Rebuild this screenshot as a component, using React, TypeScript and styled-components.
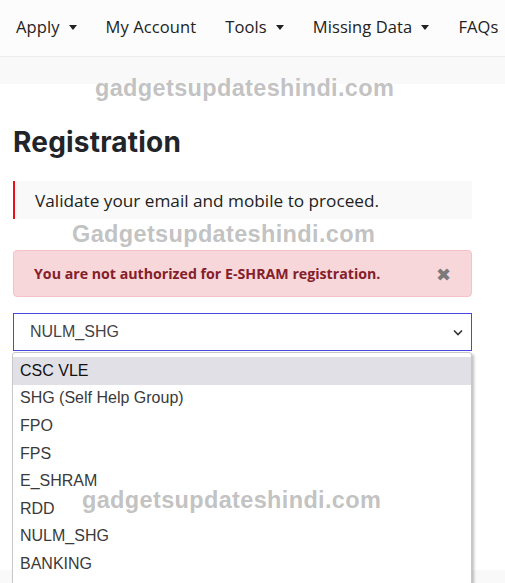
import React from "react";
import styled, { createGlobalStyle } from "styled-components";

const Global = createGlobalStyle`
  html, body { margin: 0; padding: 0; background: #fff; }
  body { font-family: "Open Sans", "Noto Sans", sans-serif; color: #212529; overflow: hidden; }
  * { box-sizing: border-box; }
`;

const Page = styled.div`
  position: relative;
  width: 505px;
  height: 583px;
  overflow: hidden;
`;

const Nav = styled.nav`
  height: 57px;
  background: #fcfcfc;
  border-bottom: 1px solid #ececec;
  display: flex;
  align-items: center;
  padding: 0 0 3px 16px;
  gap: 29px;
  white-space: nowrap;
`;

const NavItem = styled.div`
  display: flex;
  align-items: center;
  gap: 9px;
  font-size: 16.5px;
  color: #222;
  letter-spacing: 0.1px;
`;

const Caret = styled.span`
  width: 0;
  height: 0;
  border-left: 4px solid transparent;
  border-right: 4px solid transparent;
  border-top: 5px solid #222;
  margin-top: 1px;
`;

const Band = styled.div`
  height: 27px;
  background: #f9f9f9;
`;

const Main = styled.main`
  padding: 0 33px 0 13px;
  display: flex;
  flex-direction: column;
`;

const Heading = styled.h1`
  margin: 40px 0 0;
  font-family: "Inter", sans-serif;
  font-weight: 700;
  font-size: 28px;
  letter-spacing: 0.2px;
  line-height: 36px;
  color: #212529;
`;

const Notice = styled.div`
  margin-top: 21px;
  height: 38px;
  background: #f9f9f9;
  border-left: 2px solid #e8101a;
  display: flex;
  align-items: center;
  padding-left: 20px;
  font-size: 17.2px;
  color: #222;
`;

const Alert = styled.div`
  margin-top: 31px;
  height: 47px;
  background: #f8d7da;
  border: 1px solid #f5c2c7;
  border-radius: 4px;
  display: flex;
  align-items: center;
  justify-content: space-between;
  padding: 0 20px 0 20px;
  font-size: 14.2px;
  font-weight: 700;
  color: #842029;
`;

const Close = styled.span`
  font-family: "DejaVu Sans", sans-serif;
  font-size: 18px;
  font-weight: 700;
  color: #7a7a7a;
  line-height: 1;
  margin-top: 3px;
`;

const SelectWrap = styled.div`
  position: relative;
  margin-top: 16px;
`;

const SelectBox = styled.div`
  height: 38px;
  border: 1px solid #4747e6;
  display: flex;
  align-items: center;
  justify-content: space-between;
  padding: 0 8px 0 16px;
  font-family: "Liberation Sans", Arial, sans-serif;
  font-size: 16px;
  color: #444;
`;

const Popup = styled.ul`
  position: absolute;
  left: -1px;
  top: 39px;
  width: 460px;
  margin: 0;
  padding: 4px 0 6px;
  list-style: none;
  background: #fff;
  border: 1px solid #c8c8c8;
  border-radius: 3px;
  box-shadow: 2px 2px 3px rgba(0, 0, 0, 0.25);
  z-index: 2;
`;

const Option = styled.li<{ $active?: boolean }>`
  height: 27.6px;
  display: flex;
  align-items: center;
  padding-left: 7px;
  font-family: "Liberation Sans", Arial, sans-serif;
  font-size: 16px;
  color: ${(p) => (p.$active ? "#111" : "#3a3a3a")};
  background: ${(p) => (p.$active ? "#e1e0e6" : "transparent")};
`;

const Footer = styled.div`
  position: absolute;
  left: 0;
  right: 0;
  bottom: 0;
  height: 13px;
  background: #f9f9f9;
`;

const Watermark = styled.div<{ $x: number; $y: number }>`
  position: absolute;
  left: ${(p) => p.$x}px;
  top: ${(p) => p.$y}px;
  font-family: "Liberation Sans", Arial, sans-serif;
  font-weight: 700;
  font-size: 23.5px;
  letter-spacing: 0.35px;
  color: rgba(160, 160, 160, 0.65);
  text-shadow: 0 0 1px rgba(255, 255, 255, 0.6);
  z-index: 5;
  white-space: nowrap;
`;

const options = [
  "CSC VLE",
  "SHG (Self Help Group)",
  "FPO",
  "FPS",
  "E_SHRAM",
  "RDD",
  "NULM_SHG",
  "BANKING",
];

export default function App() {
  return (
    <Page>
      <Global />
      <Nav>
        <NavItem>
          Apply <Caret />
        </NavItem>
        <NavItem>My Account</NavItem>
        <NavItem>
          Tools <Caret />
        </NavItem>
        <NavItem>
          Missing Data <Caret />
        </NavItem>
        <NavItem>FAQs</NavItem>
      </Nav>
      <Band />
      <Main>
        <Heading>Registration</Heading>
        <Notice>Validate your email and mobile to proceed.</Notice>
        <Alert>
          <span>You are not authorized for E-SHRAM registration.</span>
          <Close>✖</Close>
        </Alert>
        <SelectWrap>
          <SelectBox>
            <span>NULM_SHG</span>
            <svg width="10" height="7" viewBox="0 0 10 7">
              <path d="M1 1.5 L5 5.5 L9 1.5" fill="none" stroke="#333" strokeWidth="1.6" />
            </svg>
          </SelectBox>
          <Popup>
            {options.map((o, i) => (
              <Option key={o} $active={i === 0}>
                {o}
              </Option>
            ))}
          </Popup>
        </SelectWrap>
      </Main>
      <Footer />
      <Watermark $x={95} $y={75}>gadgetsupdateshindi.com</Watermark>
      <Watermark $x={72} $y={221}>Gadgetsupdateshindi.com</Watermark>
      <Watermark $x={82} $y={487}>gadgetsupdateshindi.com</Watermark>
    </Page>
  );
}
